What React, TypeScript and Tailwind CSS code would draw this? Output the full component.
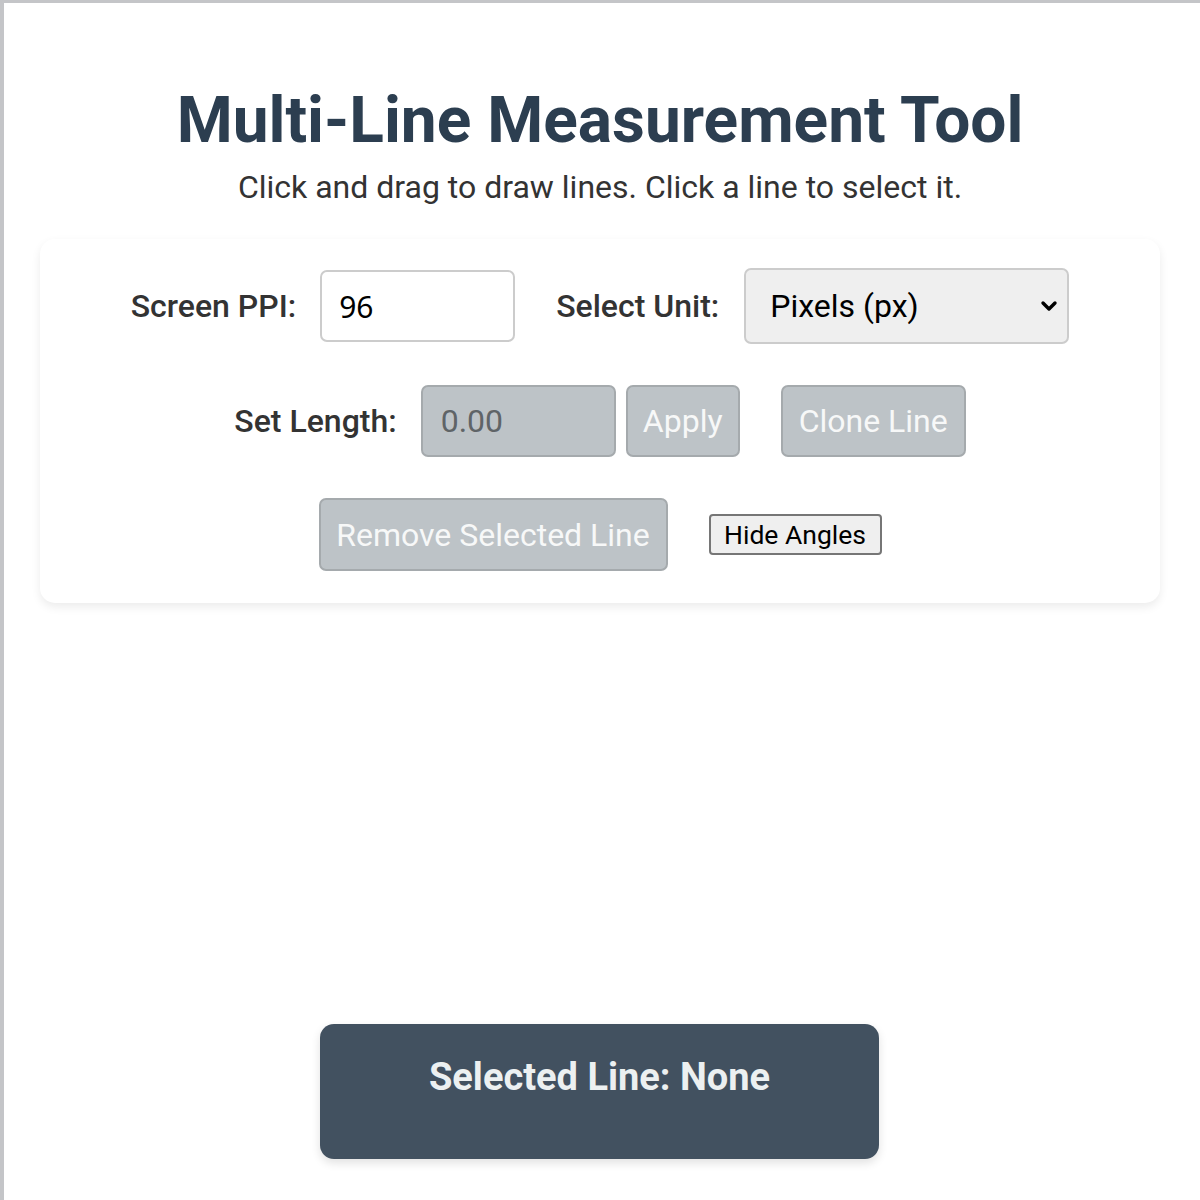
import React from "react";

export default function App() {
  return (
    <div
      className="min-h-[1200px] bg-white border-t-[3px] border-l-[4px] border-[#c4c5c8]"
      style={{ fontFamily: "Roboto, 'Noto Sans', sans-serif" }}
    >
      <div className="pt-[78px] pr-[4px] text-center">
        <h1 className="text-[64px] leading-[80px] font-bold text-[#2c3e50]">
          Multi-Line Measurement Tool
        </h1>
        <p className="mt-[6px] text-[32px] leading-[40px] text-[#333333]">
          Click and drag to draw lines. Click a line to select it.
        </p>
      </div>

      <div className="ml-[36px] mt-[32px] w-[1120px] h-[364px] bg-white rounded-[15px] shadow-[0_4px_10px_rgba(0,0,0,0.08)] flex flex-col items-center pt-[29px]">
        <div className="flex items-center justify-center h-[76px]">
          <label className="text-[32px] font-medium text-[#333333]">Screen PPI:</label>
          <div className="ml-[24px] w-[195px] h-[72px] border-2 border-[#cccccc] rounded-[7px] bg-white flex items-center pl-[17px] text-[30px] text-black" style={{ fontFamily: "'Noto Sans', sans-serif" }}>
            96
          </div>
          <label className="ml-[41px] text-[32px] font-medium text-[#333333]">Select Unit:</label>
          <div className="ml-[25px] w-[325px] h-[76px] border-2 border-[#cccccc] rounded-[7px] bg-[#efefef] flex items-center justify-between pl-[24px] pr-[8px] text-[32px] text-black">
            <span>Pixels (px)</span>
            <svg width="20" height="14" viewBox="0 0 20 14">
              <path d="M4 4 L10 10 L16 4" fill="none" stroke="#000" strokeWidth="3.4" strokeLinecap="round" strokeLinejoin="round" />
            </svg>
          </div>
        </div>

        <div className="flex items-center justify-center h-[74px] mt-[40px]">
          <label className="text-[32px] font-medium text-[#333333]">Set Length:</label>
          <div className="ml-[24px] w-[195px] h-[72px] border-2 border-[#a5aaad] rounded-[7px] bg-[#bdc3c7] flex items-center pl-[18px] text-[32px] text-[#5f6467]">
            0.00
          </div>
          <button className="ml-[10px] w-[114px] h-[72px] border-2 border-[#a5aaad] rounded-[7px] bg-[#bdc3c7] text-[32px] text-[#f7f8f8]">
            Apply
          </button>
          <button className="ml-[41px] w-[185px] h-[72px] border-2 border-[#a5aaad] rounded-[7px] bg-[#bdc3c7] text-[32px] text-[#f7f8f8]">
            Clone Line
          </button>
        </div>

        <div className="flex items-center justify-center h-[73px] mt-[40px]">
          <button className="w-[349px] h-[73px] border-2 border-[#a5aaad] rounded-[7px] bg-[#bdc3c7] text-[32px] text-[#f7f8f8]">
            Remove Selected Line
          </button>
          <button className="ml-[41px] w-[173px] h-[41px] border-2 border-[#767676] rounded-[4px] bg-[#efefef] text-[26.5px] leading-[30px] text-black">
            Hide Angles
          </button>
        </div>
      </div>

      <div className="h-[421px]" />

      <div className="ml-[316px] w-[559px] h-[135px] bg-[#425160] rounded-[14px] shadow-[0_4px_10px_rgba(0,0,0,0.12)] pt-[29px] text-center">
        <h3 className="text-[38px] leading-[48px] font-bold text-[#ecf0f1]">Selected Line: None</h3>
      </div>
    </div>
  );
}
